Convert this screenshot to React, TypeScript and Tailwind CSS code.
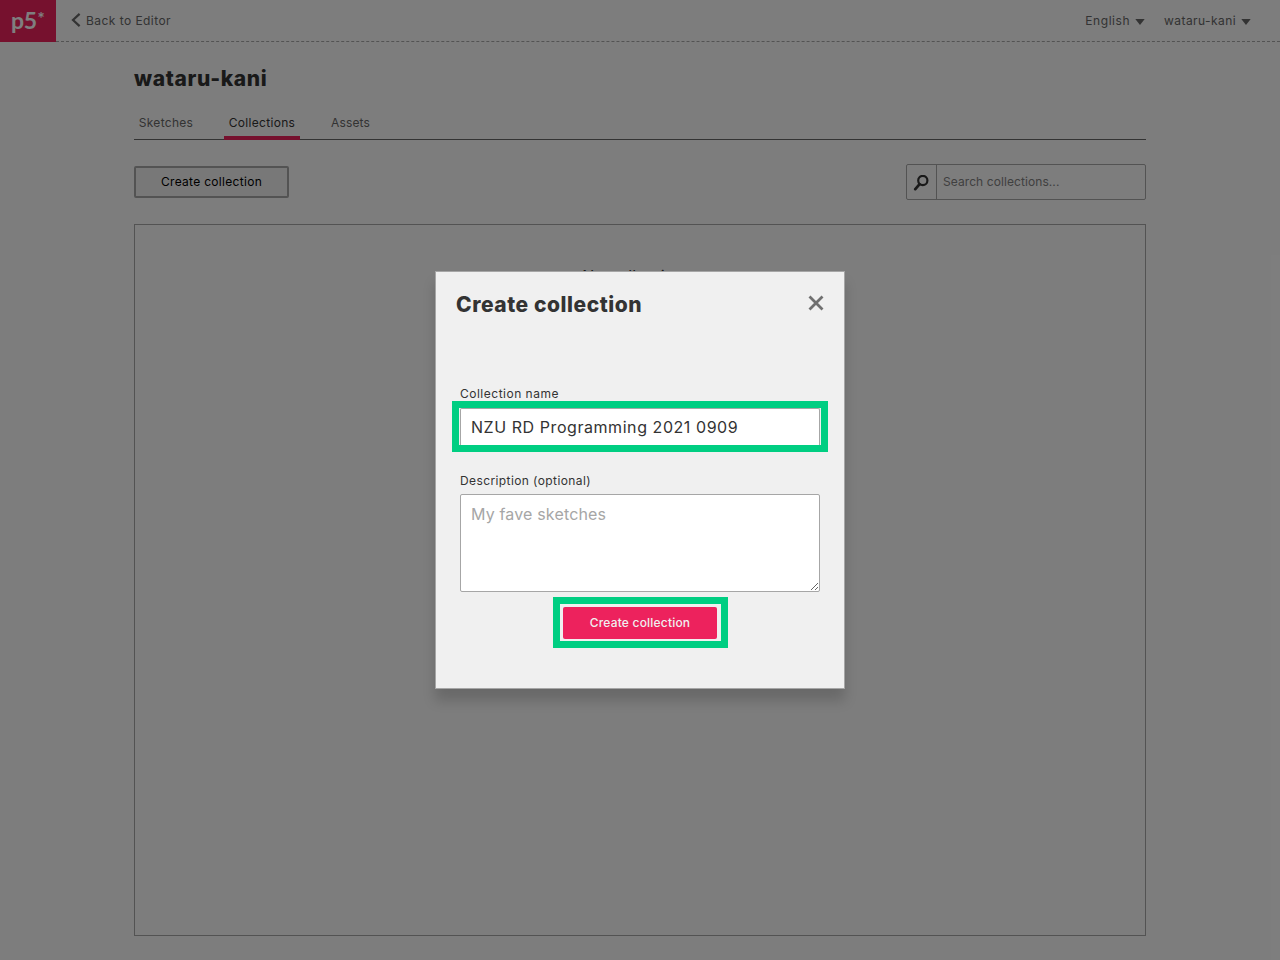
import type { ReactNode } from "react";

const ArrowDown = () => (
  <svg width="10" height="6" viewBox="0 0 10 6" className="mt-[3px] ml-[5px]" fill="#666">
    <path d="M0.3 0H9.7L5 6Z" />
  </svg>
);

function Tab({ children, active, className }: { children: ReactNode; active?: boolean; className: string }) {
  return (
    <div
      className={`flex h-[29px] justify-center border-b-4 pt-[3px] text-[12px] leading-[18px] whitespace-nowrap ${className} ${
        active ? "border-[#ed225d] text-[#333]" : "border-transparent text-[#666]"
      }`}
    >
      {children}
    </div>
  );
}

function Header() {
  return (
    <header className="flex h-[42px] text-[12px] leading-[18px] text-[#666]">
      <div className="flex h-[42px] w-14 bg-[#ed225d] pl-[11px] font-['Lato'] text-white">
        <span className="mt-[6px] text-[23px] leading-7 font-bold tracking-[-0.4px]">p5</span>
        <span className="mt-[9px] ml-[1px] text-[17px] leading-5 font-bold">*</span>
      </div>
      <div className="flex flex-1 border-b border-dashed border-[#a6a6a6] pt-3 pr-[29px] pl-[15px]">
        <svg width="10" height="14" viewBox="0 0 10 14" fill="none" stroke="#666" strokeWidth="2.2" className="mt-[1px]">
          <path d="M8.6 0.9L2 7L8.6 13.1" />
        </svg>
        <span className="ml-[5px] tracking-[0.45px] whitespace-nowrap">Back to Editor</span>
        <div className="ml-auto flex items-start">
          <span className="tracking-[0.55px] whitespace-nowrap">English</span>
          <span className="mt-1"><ArrowDown /></span>
          <span className="ml-[19px] tracking-[0.42px] whitespace-nowrap">wataru-kani</span>
          <span className="mt-1"><ArrowDown /></span>
        </div>
      </div>
    </header>
  );
}

function Dialog() {
  return (
    <section className="absolute top-[271px] left-[435px] h-[418px] w-[410px] border border-[#a6a6a6] bg-[#f0f0f0] shadow-[0_12px_12px_rgba(0,0,0,0.16)]">
      <div className="flex items-start justify-between pt-[19px] pr-5 pl-5">
        <h2 className="text-[21px] leading-7 font-extrabold tracking-[0.55px] whitespace-nowrap text-[#333]">Create collection</h2>
        <svg width="16" height="16" viewBox="0 0 16 16" fill="none" stroke="#707070" strokeWidth="2.8" className="mt-1">
          <path d="M1.5 1.5L14.5 14.5M14.5 1.5L1.5 14.5" />
        </svg>
      </div>
      <form className="flex flex-col px-6 pt-[66px]">
        <label className="text-[12px] leading-[18px] tracking-[0.5px] text-[#333]">Collection name</label>
        <div className="-mx-2 -mt-[2px] h-[51px] border-7 border-[#00ce82]">
          <div className="mx-[1px] h-[37px] rounded-t-xs border border-b-0 border-[#a6a6a6] bg-white pl-[10px] text-[16px] leading-[36px] tracking-[0.56px] whitespace-nowrap text-[#333]">
            NZU RD Programming 2021 0909
          </div>
        </div>
        <label className="mt-5 text-[12px] leading-[18px] tracking-[0.4px] text-[#333]">Description (optional)</label>
        <textarea
          placeholder="My fave sketches"
          className="mt-1 h-[98px] w-[360px] resize rounded-xs border border-[#a6a6a6] bg-white px-[10px] py-[7px] text-[16px] leading-6 tracking-[0.16px] placeholder:text-[#a6a6a6]"
        />
        <div className="mt-[5px] ml-[93px] h-[51px] w-[175px] border-7 border-[#00ce82] p-[3px]">
          <button type="button" className="block h-8 w-[154px] rounded-xs bg-[#ed225d] text-[12px] leading-8 font-medium tracking-[0.2px] whitespace-nowrap text-[#f0f0f0]">
            Create collection
          </button>
        </div>
      </form>
    </section>
  );
}

export default function App() {
  return (
    <div className="relative h-[960px] w-[1280px] overflow-hidden bg-[#fbfbfb] font-['Inter',sans-serif]">
      <Header />
      <main className="px-[134px] pt-[23px]">
        <h1 className="text-[21px] leading-7 font-extrabold tracking-[0.65px] whitespace-nowrap text-[#333]">wataru-kani</h1>
        <nav className="mt-[18px] flex h-[29px] border-b border-[#666]">
          <Tab className="w-16 tracking-[0.3px]">Sketches</Tab>
          <Tab active className="ml-[26px] w-[76px] tracking-[0.3px]">Collections</Tab>
          <Tab className="ml-[26px] w-[49px] tracking-[0.15px]">Assets</Tab>
        </nav>
        <div className="mt-6 flex items-center justify-between">
          <button className="h-8 w-[155px] rounded-xs border-2 border-[#a6a6a6] bg-[#f0f0f0] text-[12px] leading-[18px] tracking-[0.3px] whitespace-nowrap text-black">
            Create collection
          </button>
          <div className="flex h-9 w-60 rounded-xs border border-[#a6a6a6]">
            <div className="flex w-[30px] border-r border-[#a6a6a6]">
              <svg width="16" height="16" viewBox="0 0 16 16" fill="none" stroke="#333" className="mt-[10px] ml-[6px]">
                <circle cx="9.8" cy="5.5" r="4.6" strokeWidth="2.2" />
                <path d="M6.6 9.2L2.3 14.1" strokeWidth="2.8" strokeLinecap="round" />
              </svg>
            </div>
            <span className="pt-2 pl-[6px] text-[12px] leading-[18px] tracking-[0.08px] whitespace-nowrap text-[#808080]">Search collections...</span>
          </div>
        </div>
        <div className="mt-6 h-[712px] border border-[#a6a6a6] pt-[39px] text-center text-[16px] leading-6 tracking-[0.2px] text-[#333]">No collections.</div>
      </main>
      <div className="absolute inset-0 bg-black/50" />
      <Dialog />
    </div>
  );
}
